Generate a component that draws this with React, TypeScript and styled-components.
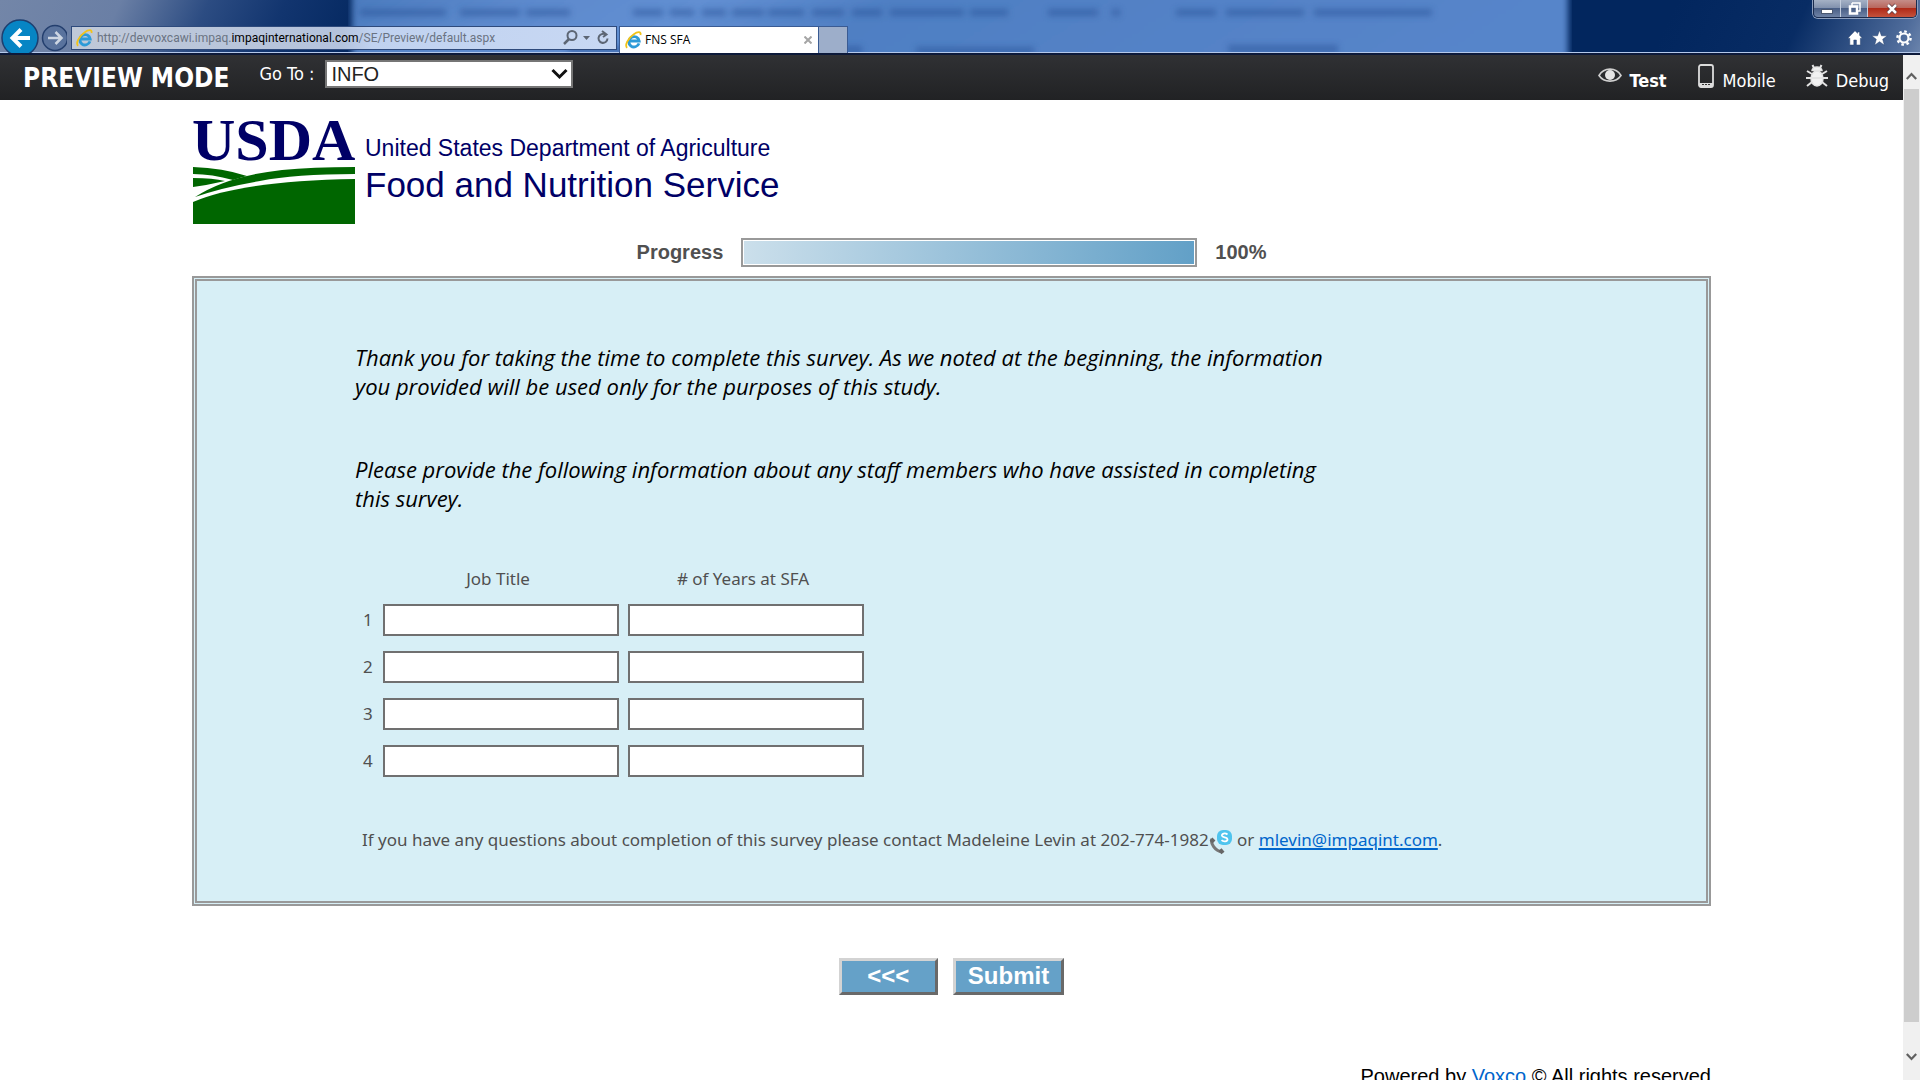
import React from 'react';
import styled, { createGlobalStyle } from 'styled-components';

const ui = '"DejaVu Sans Condensed", "DejaVu Sans", sans-serif';
const body = '"Noto Sans", "Open Sans", sans-serif';
const humanist = '"Open Sans", "Noto Sans", sans-serif';
const arial = '"Liberation Sans", Arial, sans-serif';

const Global = createGlobalStyle`
  *, *::before, *::after { box-sizing: border-box; }
  body { margin: 0; background: #fff; overflow: hidden; }
`;

const Windowed = styled.div`
  display: flex;
  flex-direction: column;
  height: 100vh;
  overflow: hidden;
  font-family: ${arial};
`;

/* Browser frame */
const Chrome = styled.header`
  position: relative;
  flex: none;
  display: flex;
  align-items: flex-end;
  height: 55px;
  border-bottom: 2px solid #0d1a3a;
  box-shadow: inset 0 -1px 0 #b4c8ea;
  background: linear-gradient(115deg, #7386a8 0, #6a7fa5 110px, #2c4c82 190px, #12356f 260px, #02265e 352px,
    #02265e 1520px, #082c64 1640px, #4f6c9b 1740px, #6b84ac 100%);
`;
const Glass = styled.svg`
  position: absolute;
  left: 348px;
  right: 348px;
  top: 0;
  width: calc(100% - 696px);
  height: 52px;
`;
const NavButton = styled.button`
  position: relative;
  flex: none;
  border: 0;
  padding: 0;
  background: none;
  line-height: 0;
`;
const AddressBar = styled.form`
  position: relative;
  display: flex;
  align-items: center;
  gap: 4px;
  width: 546px;
  height: 24px;
  margin: 0 2px 3px 4px;
  padding: 0 5px 0 4px;
  border: 1px solid #2e4a7c;
  background: linear-gradient(90deg, #c0c9d8 0, #b4c3dd 270px, #c0d2f0 300px, #c8d8f3 100%);
`;
const Url = styled.div`
  flex: 1;
  font: 12px/20px Roboto, sans-serif;
  color: #6a7382;
  white-space: nowrap;
  b { font-weight: 400; color: #000; }
`;
const Tab = styled.div`
  position: relative;
  display: flex;
  align-items: center;
  gap: 3px;
  width: 200px;
  height: 27px;
  padding: 0 6px 0 5px;
  border: 1px solid #3a5b93;
  border-bottom: 0;
  background: #fff;
  font: 12px/20px ${humanist};
  color: #000;
  span { flex: 1; }
`;
const NewTab = styled.button`
  position: relative;
  width: 29px;
  height: 27px;
  border: 1px solid #3a5b93;
  border-width: 1px 1px 0 0;
  background: #9daeca;
`;
const ChromeTools = styled.div`
  position: relative;
  display: flex;
  flex-direction: column;
  align-items: flex-end;
  align-self: stretch;
  justify-content: space-between;
  margin-left: auto;
  padding: 0 3px 7px 0;
`;
const WindowButtons = styled.div`
  display: flex;
  height: 18px;
  border: 1px solid #1b2c4e;
  border-top: 0;
  border-radius: 0 0 5px 5px;
  box-shadow: 0 0 0 1px #8d9fbe;
  overflow: hidden;
`;
const WindowButton = styled.button<{ $close?: boolean }>`
  width: ${p => (p.$close ? 48 : 27)}px;
  padding: 0;
  border: 0;
  border-right: ${p => (p.$close ? '0' : '1px solid #c3cddd')};
  line-height: 0;
  background: ${p => p.$close
    ? 'linear-gradient(#c58d88 0, #b9675d 45%, #b02a18 50%, #c4523c 100%)'
    : 'linear-gradient(#a5b1c5 0, #8292ae 45%, #4a5f86 50%, #6f83a6 100%)'};
`;
const ToolIcons = styled.div`
  display: flex;
  gap: 8px;
  padding-right: 5px;
`;

/* Page area with its scroll bar */
const View = styled.div`
  flex: 1;
  min-height: 0;
  display: flex;
`;
const Page = styled.div`
  flex: 1;
  min-width: 0;
  overflow: hidden;
`;
const Scrollbar = styled.div`
  flex: none;
  display: flex;
  flex-direction: column;
  width: 17px;
  background: #f0f0f0;
`;
const ScrollArrow = styled.button<{ $tall?: boolean }>`
  height: ${p => (p.$tall ? 58 : 34)}px;
  padding: ${p => (p.$tall ? '12px' : '8px')} 0 0;
  border: 0;
  background: none;
  line-height: 0;
`;
const Thumb = styled.div`
  flex: 1;
  margin: 0 1px;
  background: #cdcdcd;
`;

const PreviewBar = styled.nav`
  display: flex;
  align-items: center;
  height: 45px;
  padding: 0 14px 0 23px;
  background: linear-gradient(#303134, #212224);
  color: #fff;
  font: 18px/24px ${ui};
`;
const Mode = styled.strong`
  margin-right: 30px;
  font: 700 26px/32px ${ui};
`;
const GoTo = styled.label`
  display: flex;
  align-items: center;
  gap: 11px;
  padding-bottom: 8px;
`;
const Picker = styled.div`
  position: relative;
  display: flex;
  svg { position: absolute; right: 5px; top: 8px; pointer-events: none; }
`;
const Select = styled.select`
  appearance: none;
  width: 248px;
  height: 28px;
  padding: 0 0 0 4px;
  border: 2px solid #767676;
  border-radius: 0;
  background: #fff;
  color: #222;
  font: 20px/22px ${arial};
`;
const Modes = styled.div`
  display: flex;
  gap: 30px;
  margin-left: auto;
`;
const ModeLink = styled.a<{ $active?: boolean }>`
  display: flex;
  gap: 8px;
  color: #fff;
  font-weight: ${p => (p.$active ? 700 : 400)};
  text-decoration: none;
  span { padding-top: 6px; }
  svg { margin-top: 1px; }
`;

const Main = styled.main`
  padding: 12px 192px 0;
`;
const Brand = styled.div`
  display: flex;
  gap: 10px;
  color: #000066;
`;
const Mark = styled.svg`
  display: block;
  overflow: visible;
`;
const BrandText = styled.div`
  padding-top: 22px;
  font-size: 23px;
  line-height: 28px;
  strong { display: block; font-weight: 400; font-size: 35px; line-height: 46px; }
`;
const Progress = styled.div`
  display: flex;
  align-items: center;
  justify-content: center;
  gap: 18px;
  margin: 12px 0 9px;
  color: #505050;
  font: 700 20px/30px ${arial};
`;
const Bar = styled.div`
  width: 456px;
  height: 29px;
  padding: 1px;
  border: 2px solid #999;
`;
const Fill = styled.div`
  height: 100%;
  background: linear-gradient(90deg, #cbdfeb, #62a0c7);
`;
const Panel = styled.section`
  padding: 62px 158px 46px;
  border: 5px double #999;
  background: #d7eff6;
  color: #505050;
  font: 17px/24px ${body};
`;
const Intro = styled.p`
  max-width: 980px;
  margin: 0 0 54px;
  color: #000;
  font: italic 22px/29px ${humanist};
`;
const Grid = styled.table`
  border-collapse: separate;
  border-spacing: 0;
  margin-left: 8px;
  th { font-weight: 400; padding: 0; }
  thead th { padding: 0 15px 13px 0; }
  tbody th { width: 20px; padding-bottom: 15px; text-align: left; }
  td { padding: 0 9px 15px 0; }
`;
const Field = styled.input`
  display: block;
  width: 236px;
  height: 32px;
  border: 2px solid #707070;
  border-radius: 0;
  background: #fff;
  font: 17px ${body};
`;
const Contact = styled.p`
  margin: 36px 0 0 7px;
  white-space: nowrap;
  a { color: #0066cc; text-decoration-thickness: 2px; text-underline-offset: 2px; }
  svg { vertical-align: -9px; }
`;
const Actions = styled.div`
  display: flex;
  justify-content: center;
  gap: 15px;
  margin-top: 52px;
`;
const Action = styled.button`
  min-width: 99px;
  height: 37px;
  padding: 0 12px 2px;
  border: 3px solid;
  border-color: #d3d3d3 #696969 #696969 #d3d3d3;
  background: #65a1c8;
  color: #fff;
  font: 700 24px/28px ${arial};
`;
const Footer = styled.footer`
  margin-top: 69px;
  color: #000;
  text-align: right;
  font: 20px/24px ${arial};
  a { color: #0066cc; text-decoration: none; }
`;

const IeLogo = () => (
  <svg width="17" height="18" viewBox="0 0 17 18" aria-hidden="true">
    <path d="M14 12.400A5.200 5.200 0 1 1 14.200 10H5" fill="none" stroke="#2d9bd8" strokeWidth="2.800" />
    <path d="M2.200 16.800C-.6 14.600 3 7 8.500 3.400 12.500.6 16.600.2 15.400 4" fill="none" stroke="#f2c318" strokeWidth="1.800" />
  </svg>
);

const smudges = [[12, 86], [112, 60], [178, 44], [285, 30], [322, 24], [354, 24], [384, 32], [420, 36], [464, 32], [504, 30], [542, 74], [622, 38], [700, 50], [764, 8], [828, 40], [878, 78], [966, 118]];

export default function App() {
  return (
    <Windowed>
      <Global />
      <Chrome>
        <Glass viewBox="0 0 1224 52" preserveAspectRatio="none" aria-hidden="true">
          <defs>
            <linearGradient id="sky" x1="0" x2="1" y1="0" y2="0.100">
              <stop offset="0" stopColor="#4a7abd" />
              <stop offset="0.150" stopColor="#5c89cc" />
              <stop offset="0.300" stopColor="#628fd2" />
              <stop offset="0.450" stopColor="#4f7fc3" />
              <stop offset="1" stopColor="#5785ca" />
            </linearGradient>
            <filter id="soft" x="-10%" y="-100%" width="120%" height="300%"><feGaussianBlur stdDeviation="3" /></filter>
          </defs>
          <rect x="4" y="-10" width="1216" height="80" fill="url(#sky)" filter="url(#soft)" />
          <g filter="url(#soft)" fill="#264f94" opacity="0.500">
            {smudges.map(([x, w]) => <rect key={x} x={x} y="9" width={w} height="7" />)}
            <rect x="220" y="46" width="65" height="8" />
            <rect x="480" y="46" width="34" height="8" />
            <rect x="568" y="47" width="118" height="7" />
            <rect x="880" y="45" width="110" height="8" />
          </g>
        </Glass>
        <NavButton aria-label="Back">
          <svg width="40" height="35" viewBox="0 0 40 35">
            <circle cx="20" cy="20" r="18" fill="#0785c4" stroke="#1d3f70" strokeWidth="1.500" />
            <path d="M30 20H13M21 11.500L12.500 20l8.500 8.500" fill="none" stroke="#fff" strokeWidth="4" />
          </svg>
        </NavButton>
        <NavButton aria-label="Forward">
          <svg width="27" height="35" viewBox="0 0 27 35">
            <circle cx="15" cy="20" r="12.500" fill="#456393" fillOpacity=".5" stroke="#243f6e" strokeWidth="1.500" />
            <path d="M8 20h13M15.500 14l6 6-6 6" fill="none" stroke="#ccd5e2" strokeWidth="2.500" />
          </svg>
        </NavButton>
        <AddressBar>
          <IeLogo />
          <Url>http://devvoxcawi.impaq.<b>impaqinternational.com</b>/SE/Preview/default.aspx</Url>
          <svg width="48" height="18" viewBox="0 0 48 18" fill="none" stroke="#5d6674" strokeWidth="2" aria-hidden="true">
            <circle cx="9" cy="6.500" r="4.500" /><path d="M6 10l-5 5" strokeWidth="2.500" />
            <path d="M20 7h7l-3.500 4z" fill="#5d6674" stroke="none" />
            <path d="M43 6a4.500 4.500 0 1 0 1.500 3.500M39 2l4.500 3.500L40 8" />
          </svg>
        </AddressBar>
        <Tab>
          <IeLogo />
          <span>FNS SFA</span>
          <svg width="8" height="8" viewBox="0 0 8 8" stroke="#a5a5a5" strokeWidth="2" aria-hidden="true"><path d="M.5.5l7 7M7.500.5l-7 7" /></svg>
        </Tab>
        <NewTab aria-label="New tab" />
        <ChromeTools>
          <WindowButtons>
            <WindowButton aria-label="Minimize"><svg width="12" height="12" viewBox="0 0 12 12"><rect x=".5" y="6.500" width="11" height="4" fill="#fff" stroke="#4b5871" /></svg></WindowButton>
            <WindowButton aria-label="Restore"><svg width="13" height="13" viewBox="0 0 13 13"><path d="M4 1h8v8h-2M4 4V1" fill="none" stroke="#fff" strokeWidth="1.500" /><rect x="2" y="4.500" width="7" height="7" fill="none" stroke="#fff" strokeWidth="2.500" /></svg></WindowButton>
            <WindowButton $close aria-label="Close"><svg width="12" height="12" viewBox="0 0 12 12"><path d="M2 2l8 8M10 2l-8 8" stroke="#5a3a42" strokeWidth="4" /><path d="M2 2l8 8M10 2l-8 8" stroke="#fff" strokeWidth="2.500" /></svg></WindowButton>
          </WindowButtons>
          <ToolIcons>
            <svg width="16" height="16" viewBox="0 0 16 16" fill="#fff" stroke="#24406f" strokeWidth=".5" aria-label="Home"><path d="M8 .8L.8 8.200h2V15h4v-5h2.600v5h4V8.200h2L12.600 5.300V2h-2v1.300z" /></svg>
            <svg width="17" height="16" viewBox="0 0 17 16" fill="#fff" stroke="#24406f" strokeWidth=".5" aria-label="Favorites"><path d="M8.500.4l2 5.400h5.800l-4.600 3.500 1.700 5.900-4.900-3.500-4.900 3.500 1.700-5.900L.7 5.800h5.800z" /></svg>
            <svg width="16" height="16" viewBox="0 0 16 16" fill="none" stroke="#fff" aria-label="Settings"><circle cx="8" cy="8" r="4.500" strokeWidth="2.200" /><circle cx="8" cy="8" r="6.600" strokeWidth="2.400" strokeDasharray="2.600 2.584" /></svg>
          </ToolIcons>
        </ChromeTools>
      </Chrome>
      <View>
        <Page>
          <PreviewBar>
            <Mode>PREVIEW MODE</Mode>
            <GoTo>
              Go To :
              <Picker>
                <Select defaultValue="INFO"><option>INFO</option></Select>
                <svg width="17" height="12" viewBox="0 0 17 12"><path d="M1.500 2l7 7 7-7" fill="none" stroke="#111" strokeWidth="3" /></svg>
              </Picker>
            </GoTo>
            <Modes>
              <ModeLink href="#test" $active>
                <svg width="24" height="24" viewBox="0 0 24 24" aria-hidden="true"><path d="M1 11.500C6 3 18 3 23 11.500 18 19 6 19 1 11.500z" fill="none" stroke="#d0d0d0" strokeWidth="1.600" /><circle cx="12" cy="11" r="5" fill="#e4e4e4" /></svg>
                <span>Test</span>
              </ModeLink>
              <ModeLink href="#mobile">
                <svg width="18" height="24" viewBox="0 0 18 24" aria-hidden="true"><rect x="2" y="1" width="14" height="22" rx="2" fill="none" stroke="#dcdcdc" strokeWidth="1.800" /><path d="M2 19h14v3H2z" fill="#dcdcdc" /><path d="M5 20.500h2M8 20.500h2M11 20.500h2" stroke="#333" /></svg>
                <span>Mobile</span>
              </ModeLink>
              <ModeLink href="#debug">
                <svg width="22" height="24" viewBox="0 0 22 24" aria-hidden="true" fill="#f2f2f2" stroke="#e4e4e4" strokeWidth="1.500"><ellipse cx="11" cy="14.500" rx="6" ry="7.500" /><path d="M6 6.500a5 3.500 0 0 1 10 0z" /><path d="M6.500 1l1.500 3M15.500 1L14 4M1 7l5 3M21 7l-5 3M0 14h22M1 22l5-4M21 22l-5-4" fill="none" strokeWidth="2" /></svg>
                <span>Debug</span>
              </ModeLink>
            </Modes>
          </PreviewBar>
          <Main>
            <Brand>
              <Mark width="163" height="113" viewBox="0 0 163 113" role="img" aria-label="USDA">
                <text x="0" y="48" fontFamily="Liberation Serif" fontWeight="700" fontSize="60" fill="#000066">USDA</text>
                <g fill="#006600">
                  <path d="M1 55q30 1 54 9-8 2-14 4Q20 62 1 62z" />
                  <path d="M1 66q20 0 32 3Q16 73 1 75z" />
                  <path d="M3 85Q35 64 90 58q30-3 73-3v7q-60 0-95 7-36 6-65 16z" />
                  <path d="M1 90Q50 69 163 67v45H1z" />
                </g>
              </Mark>
              <BrandText>United States Department of Agriculture<strong>Food and Nutrition Service</strong></BrandText>
            </Brand>
            <Progress>
              <span>Progress</span>
              <Bar role="progressbar" aria-valuenow={100} aria-label="Progress"><Fill /></Bar>
              <span>100%</span>
            </Progress>
            <Panel>
              <Intro>Thank you for taking the time to complete this survey. As we noted at the beginning, the information you provided will be used only for the purposes of this study.</Intro>
              <Intro>Please provide the following information about any staff members who have assisted in completing this survey.</Intro>
              <Grid>
                <thead><tr><th /><th scope="col">Job Title</th><th scope="col"># of Years at SFA</th></tr></thead>
                <tbody>
                  {[1, 2, 3, 4].map(n => (
                    <tr key={n}>
                      <th scope="row">{n}</th>
                      <td><Field aria-label={`Job Title ${n}`} /></td>
                      <td><Field aria-label={`Years at SFA ${n}`} /></td>
                    </tr>
                  ))}
                </tbody>
              </Grid>
              <Contact>
                If you have any questions about completion of this survey please contact Madeleine Levin at 202-774-1982
                <svg width="24" height="26" viewBox="0 0 24 26" aria-hidden="true">
                  <rect x="8" y="1" width="15" height="15" rx="6" fill="#4fc4ee" />
                  <path d="M18.500 5.500C16 3.500 12.500 4.500 13 6.800c.5 2 5.300 1 5.500 3.500.1 2.400-4 2.700-6 .9" fill="none" stroke="#fff" strokeWidth="1.800" />
                  <path d="M3 10C1 14 6 22 13 23" fill="none" stroke="#777" strokeWidth="3" /><path d="M2 10l3 3M11 20.500l3 3.500" stroke="#666" strokeWidth="4" />
                </svg>
                {' '}or <a href="mailto:mlevin@impaqint.com">mlevin@impaqint.com</a>.
              </Contact>
            </Panel>
            <Actions>
              <Action type="button">&lt;&lt;&lt;</Action>
              <Action type="submit">Submit</Action>
            </Actions>
            <Footer>Powered by <a href="#voxco">Voxco</a> © All rights reserved</Footer>
          </Main>
        </Page>
        <Scrollbar>
          <ScrollArrow aria-label="Scroll up"><svg width="11" height="8" viewBox="0 0 11 8"><path d="M.8 7l4.700-5 4.700 5" fill="none" stroke="#606060" strokeWidth="2.200" /></svg></ScrollArrow>
          <Thumb />
          <ScrollArrow $tall aria-label="Scroll down"><svg width="11" height="8" viewBox="0 0 11 8"><path d="M.8 1l4.700 5 4.700-5" fill="none" stroke="#606060" strokeWidth="2.200" /></svg></ScrollArrow>
        </Scrollbar>
      </View>
    </Windowed>
  );
}
